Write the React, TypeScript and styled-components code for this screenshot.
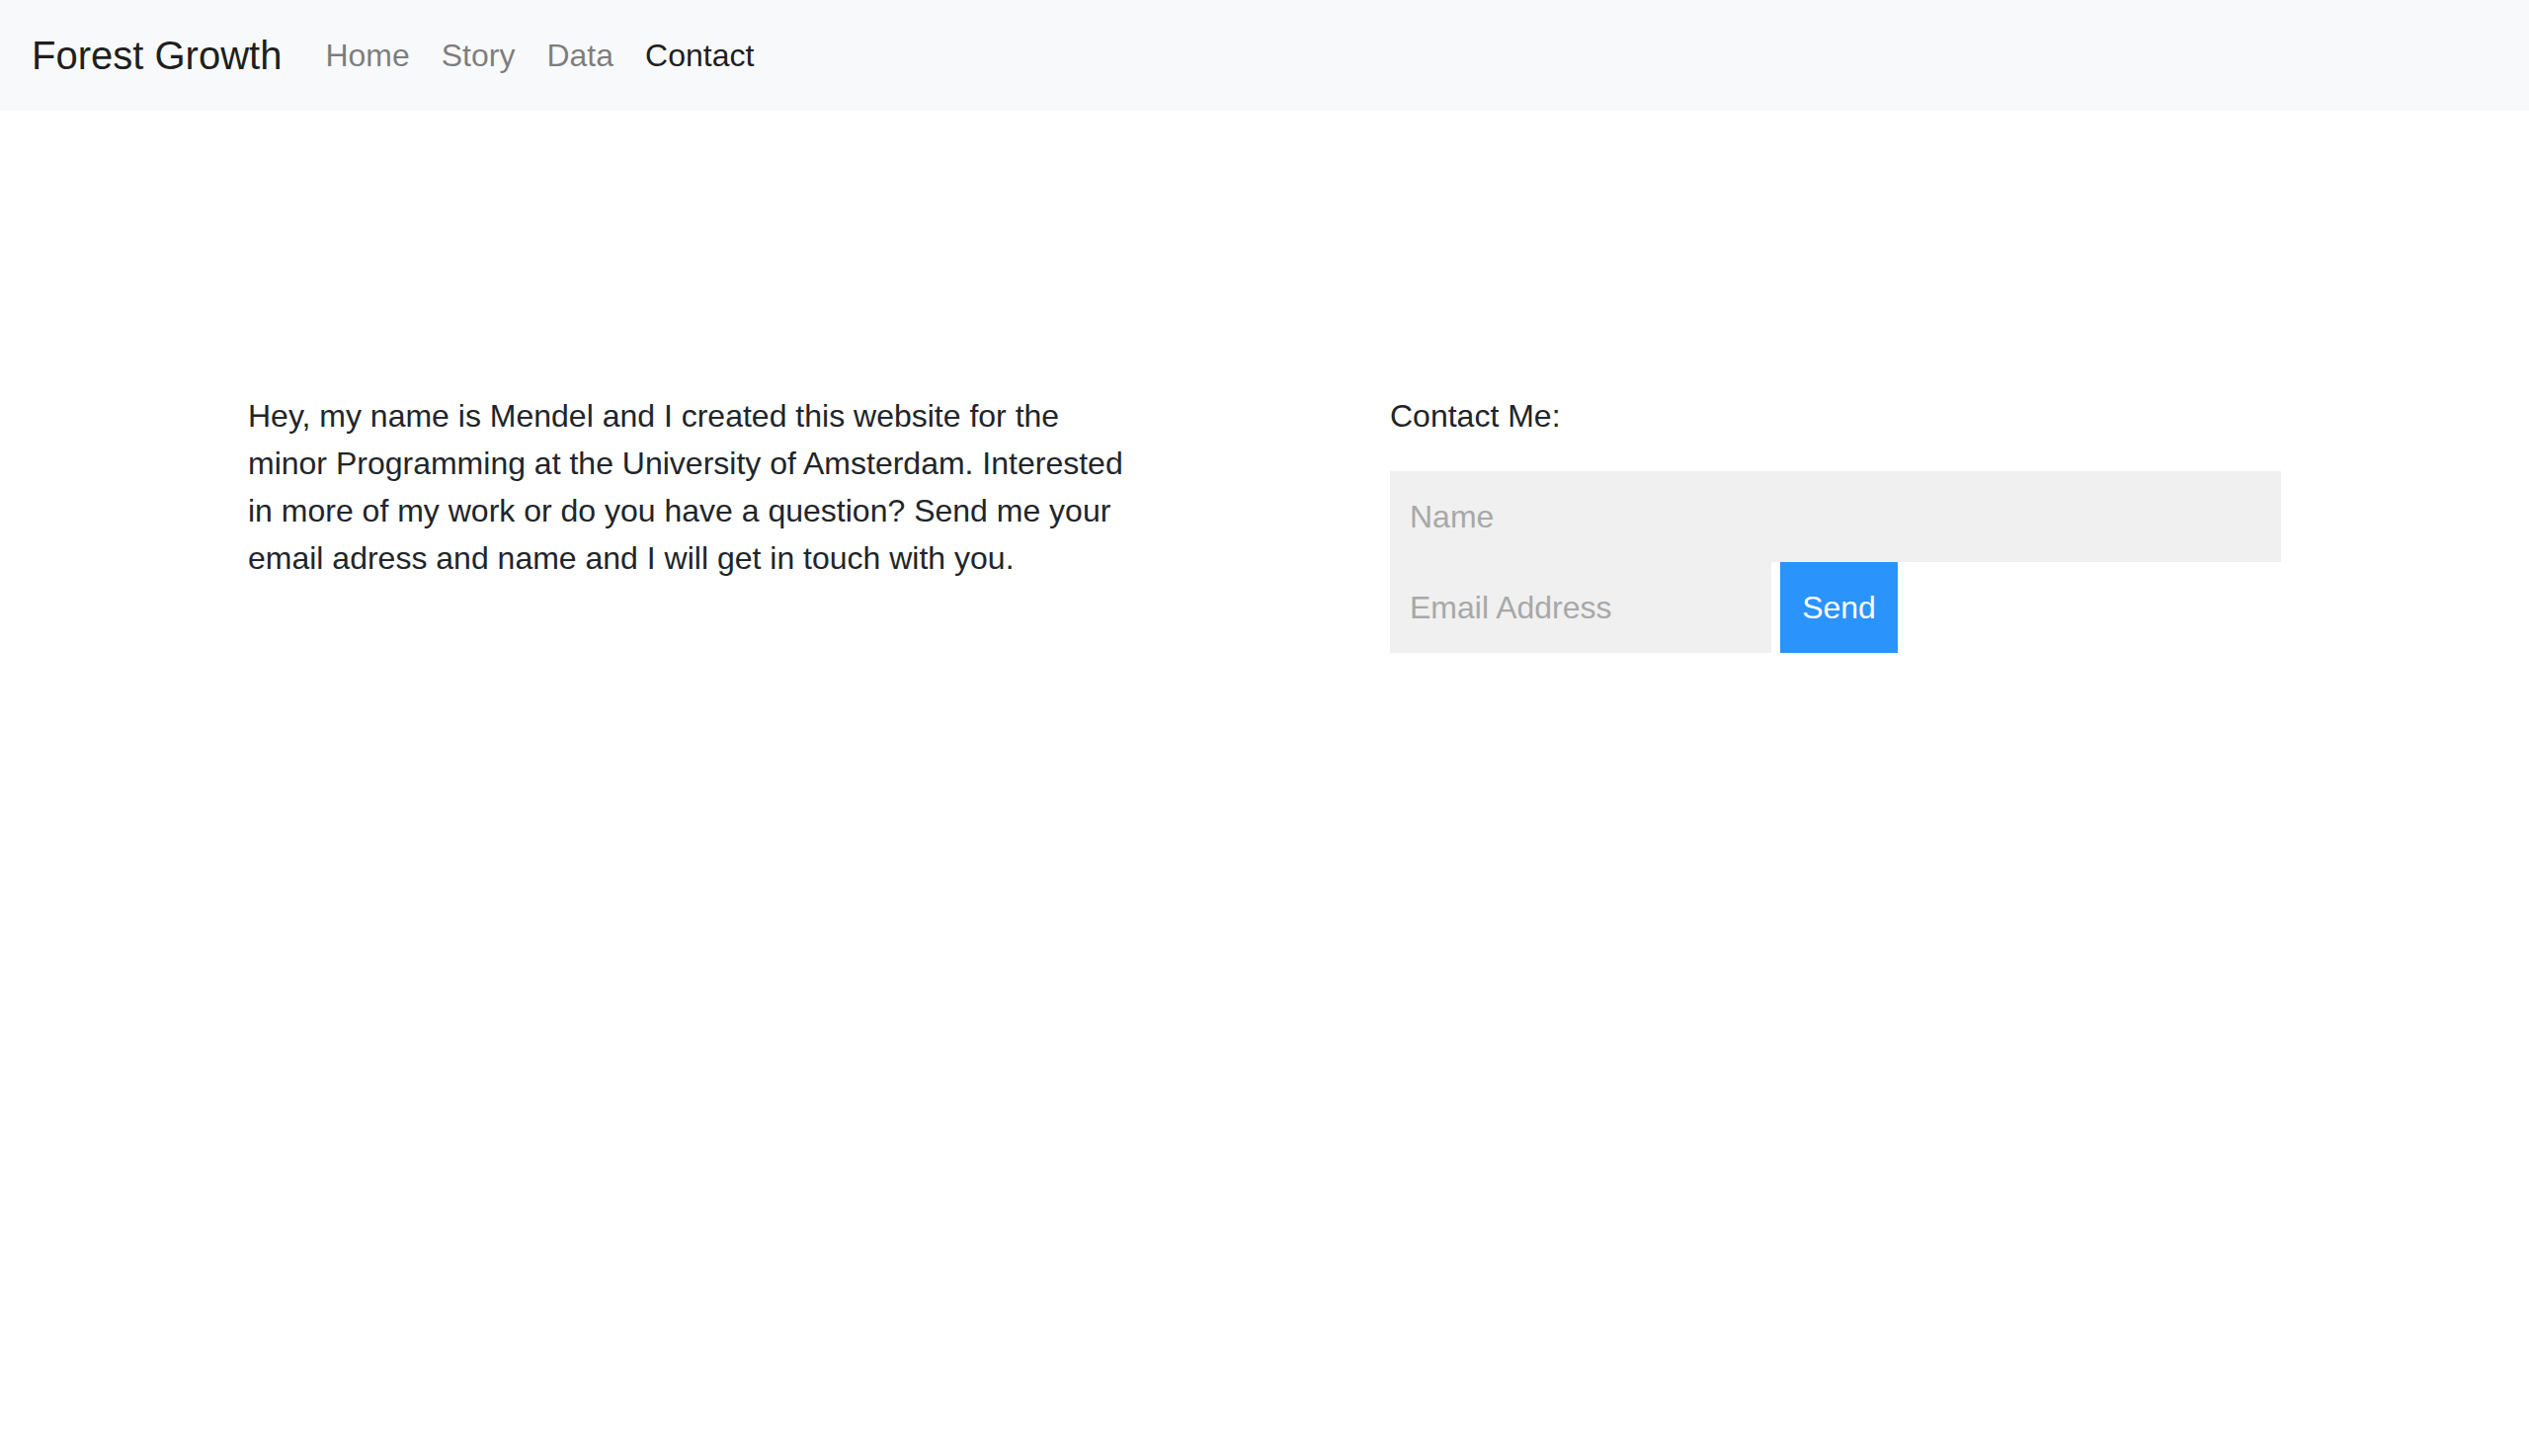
import React from "react";
import styled, { createGlobalStyle } from "styled-components";

const GlobalStyle = createGlobalStyle`
  html, body {
    margin: 0;
    padding: 0;
    background: #ffffff;
  }
  body {
    font-family: "Liberation Sans", Arial, Helvetica, sans-serif;
    color: #212529;
  }
  * { box-sizing: border-box; }
`;

const Navbar = styled.nav`
  display: flex;
  align-items: center;
  height: 112px;
  padding: 16px 32px;
  background: #f8f9fa;
`;

const Brand = styled.a`
  font-size: 40px;
  line-height: 60px;
  padding: 10px 0;
  margin-right: 28px;
  color: rgba(0, 0, 0, 0.9);
  text-decoration: none;
  white-space: nowrap;
`;

const NavList = styled.ul`
  display: flex;
  list-style: none;
  margin: 0;
  padding: 0;
`;

const NavLink = styled.a<{ $active?: boolean }>`
  display: block;
  padding: 16px;
  font-size: 32px;
  line-height: 48px;
  color: ${(p) => (p.$active ? "rgba(0, 0, 0, 0.9)" : "rgba(0, 0, 0, 0.5)")};
  text-decoration: none;
`;

const Main = styled.main`
  padding-top: 285px;
`;

const Columns = styled.div`
  width: 2058px;
  margin: 0 auto;
  display: grid;
  grid-template-columns: 1fr 1fr;
  column-gap: 254px;
`;

const Text = styled.p`
  margin: 0;
  font-size: 32px;
  line-height: 48px;
  color: #212529;
`;

const Heading = styled(Text)`
  margin-bottom: 32px;
`;

const Form = styled.form`
  display: flex;
  flex-direction: column;
`;

const Input = styled.input<{ $width?: string }>`
  width: ${(p) => p.$width ?? "100%"};
  height: 92px;
  padding: 0 20px;
  border: none;
  outline: none;
  background: #f0f0f0;
  font-family: "Liberation Sans", Arial, Helvetica, sans-serif;
  font-size: 32px;
  color: #212529;
  &::placeholder {
    color: #a8a8a8;
  }
`;

const Row = styled.div`
  display: flex;
  gap: 9px;
`;

const SendButton = styled.button`
  width: 119px;
  height: 92px;
  padding: 0;
  border: none;
  background: #2a93fc;
  color: #ffffff;
  font-family: "Liberation Sans", Arial, Helvetica, sans-serif;
  font-size: 32px;
  cursor: pointer;
`;

export default function App() {
  const links = ["Home", "Story", "Data", "Contact"];
  return (
    <>
      <GlobalStyle />
      <Navbar>
        <Brand href="#">Forest Growth</Brand>
        <NavList>
          {links.map((l) => (
            <li key={l}>
              <NavLink href="#" $active={l === "Contact"}>
                {l}
              </NavLink>
            </li>
          ))}
        </NavList>
      </Navbar>
      <Main>
        <Columns>
          <Text>
            Hey, my name is Mendel and I created this website for the minor
            Programming at the University of Amsterdam. Interested in more of my
            work or do you have a question? Send me your email adress and name
            and I will get in touch with you.
          </Text>
          <div>
            <Heading>Contact Me:</Heading>
            <Form onSubmit={(e) => e.preventDefault()}>
              <Input type="text" placeholder="Name" />
              <Row>
                <Input type="email" placeholder="Email Address" $width="386px" />
                <SendButton type="submit">Send</SendButton>
              </Row>
            </Form>
          </div>
        </Columns>
      </Main>
    </>
  );
}
